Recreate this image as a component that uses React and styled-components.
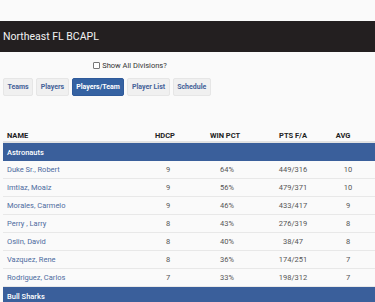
import React from "react";
import styled, { createGlobalStyle } from "styled-components";

const GlobalStyle = createGlobalStyle`
  body {
    margin: 0;
    background: #fafafa;
    font-family: Roboto, "Liberation Sans", sans-serif;
    color: #444;
  }
`;

//page wrapper
const Page = styled.div`
  padding-top: 21px;
  overflow: hidden;
`;

//dark title bar
const TitleBar = styled.header`
  height: 31px;
  background: #231f20;
  display: flex;
  align-items: center;
  padding: 0 3px;
`;

const Title = styled.h1`
  margin: 0;
  font-size: 10.5px;
  font-weight: 400;
  color: #f2f2f2;
`;

//checkbox line
const Toggle = styled.label`
  display: flex;
  align-items: center;
  justify-content: center;
  gap: 2px;
  width: 260px;
  margin: 8px 0 0 0;
  height: 10px;
  font-size: 7.5px;
  color: #333;
`;

const Box = styled.span`
  width: 5px;
  height: 5px;
  border: 1px solid #777;
  border-radius: 1px;
  background: #fff;
`;

//tab buttons
const Tabs = styled.nav`
  display: flex;
  gap: 3px;
  padding: 0 3px;
  margin-top: 8px;
`;

const Tab = styled.button`
  height: 18px;
  padding: 0 3.5px;
  border: 1px solid ${props => (props.active ? "#2f5a9a" : "#e6e6e6")};
  border-radius: 2px;
  background: ${props => (props.active ? "#3562a2" : "#f0f0f0")};
  color: ${props => (props.active ? "#fff" : "#456299")};
  font-family: Roboto, "Liberation Sans", sans-serif;
  font-size: 7px;
  font-weight: 700;
  cursor: pointer;
`;

//table
const Table = styled.div`
  margin: 31px 0 0 3px;
  font-size: 7.5px;
`;

const Row = styled.div`
  display: grid;
  grid-template-columns: 146px 38px 80px 52px 58px 1fr;
  align-items: center;
  height: ${props => (props.head ? "16px" : "18px")};
  padding-top: ${props => (props.head ? "3px" : "0")};
  border-bottom: ${props => (props.head ? "2px solid #e2e2e2" : "1px solid #e8e8e8")};
  box-sizing: border-box;
  font-weight: ${props => (props.head ? 700 : 400)};
  color: ${props => (props.head ? "#222" : "#555")};
`;

const Cell = styled.div`
  text-align: ${props => (props.left ? "left" : "center")};
  padding-left: ${props => (props.left ? "4px" : "0")};
  padding-right: ${props => (props.shift ? props.shift : "0")};
`;

const Name = styled.a`
  color: #4d6ba0;
  text-decoration: none;
`;

const Group = styled.div`
  height: 18px;
  background: #3a5f9b;
  color: #fff;
  font-weight: 500;
  display: flex;
  align-items: center;
  padding-left: 4px;
`;

const players = [
  ["Duke Sr., Robert", 9, "64%", "449/316", 10],
  ["Imtiaz, Moaiz", 9, "56%", "479/371", 10],
  ["Morales, Carmelo", 9, "46%", "433/417", 9],
  ["Perry , Larry", 8, "43%", "276/319", 8],
  ["Oslin, David", 8, "40%", "38/47", 8],
  ["Vazquez, Rene", 8, "36%", "174/251", 7],
  ["Rodriguez, Carlos", 7, "33%", "198/312", 7],
];

const App = () => (
  <>
    <GlobalStyle />
    <Page>
      <TitleBar>
        <Title>Northeast FL BCAPL</Title>
      </TitleBar>
      <Toggle>
        <Box />
        Show All Divisions?
      </Toggle>
      <Tabs>
        <Tab>Teams</Tab>
        <Tab>Players</Tab>
        <Tab active>Players/Team</Tab>
        <Tab>Player List</Tab>
        <Tab>Schedule</Tab>
      </Tabs>
      <Table>
        <Row head>
          <Cell left>NAME</Cell>
          <Cell shift="6px">HDCP</Cell>
          <Cell shift="4px">WIN PCT</Cell>
          <Cell>PTS F/A</Cell>
          <Cell shift="10px">AVG</Cell>
          <Cell />
        </Row>
        <Group>Astronauts</Group>
        {players.map(p => (
          <Row key={p[0]}>
            <Cell left>
              <Name href="#">{p[0]}</Name>
            </Cell>
            <Cell>{p[1]}</Cell>
            <Cell>{p[2]}</Cell>
            <Cell>{p[3]}</Cell>
            <Cell>{p[4]}</Cell>
            <Cell />
          </Row>
        ))}
        <Group>Bull Sharks</Group>
      </Table>
    </Page>
  </>
);

export default App;
